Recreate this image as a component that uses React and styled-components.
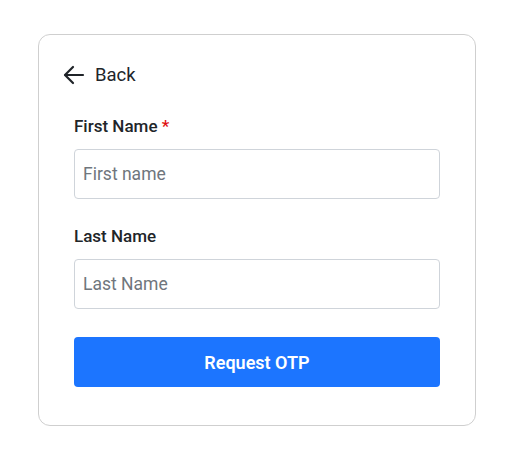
import styled, { createGlobalStyle } from "styled-components"

const GlobalStyle = createGlobalStyle`
  body {
    margin: 0;
    background: #fff;
    font-family: Roboto, "Liberation Sans", sans-serif;
  }
  * { box-sizing: border-box; }
`

export default function App() {
  return (
    <Page>
      <GlobalStyle />
      <Card>
        <BackLink type="button">
          <svg width="22" height="20" viewBox="0 0 22 20" fill="none" stroke="#1f2328" strokeWidth="2.2" strokeLinecap="round" strokeLinejoin="round">
            <path d="M20 10H2.5" />
            <path d="M10 2L2 10l8 8" />
          </svg>
          <span>Back</span>
        </BackLink>
        <Form onSubmit={e => e.preventDefault()}>
          <Field>
            <Label>First Name <Required>*</Required></Label>
            <Input placeholder="First name" />
          </Field>
          <Field>
            <Label>Last Name</Label>
            <Input placeholder="Last Name" />
          </Field>
          <Button type="submit">Request OTP</Button>
        </Form>
      </Card>
    </Page>
  )
}

const Page = styled.div`
  padding: 34px 31px 0 38px;
`
const Card = styled.div`
  width: 438px;
  border: 1px solid #cfcfcf;
  border-radius: 12px;
  padding: 27px 24px 38px 24px;
`
const BackLink = styled.button`
  display: flex;
  align-items: center;
  gap: 10px;
  background: none;
  border: none;
  padding: 0;
  height: 26px;
  font-family: inherit;
  font-size: 18.5px;
  color: #212529;
  cursor: pointer;
  margin-bottom: 26px;
`
const Form = styled.form`
  display: flex;
  flex-direction: column;
  padding: 0 11px;
`
const Field = styled.div`
  display: flex;
  flex-direction: column;
  gap: 11px;
  margin-bottom: 25px;
  &:last-of-type {
    margin-bottom: 28px;
  }
`
const Label = styled.label`
  font-size: 17px;
  font-weight: 500;
  line-height: 24px;
  color: #212529;
`
const Required = styled.span`
  color: #e01010;
`
const Input = styled.input`
  height: 50px;
  border: 1px solid #cfd4da;
  border-radius: 4px;
  padding: 0 8px;
  font-family: inherit;
  font-size: 17.5px;
  color: #212529;
  &::placeholder {
    color: #6f767d;
  }
`
const Button = styled.button`
  height: 50px;
  border: none;
  border-radius: 4px;
  background: #1c75ff;
  color: #fff;
  font-family: inherit;
  font-size: 18px;
  font-weight: 600;
  cursor: pointer;
`
